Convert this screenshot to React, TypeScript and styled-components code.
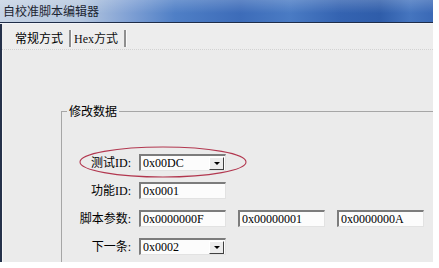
import styled, { createGlobalStyle } from "styled-components";

const GlobalStyle = createGlobalStyle`
	html, body {
		margin: 0;
		padding: 0;
		background: #ffffff;
	}
	body {
		width: 439px;
		height: 268px;
		overflow: hidden;
		font-family: "Liberation Serif", "Noto Sans CJK SC", serif;
		font-size: 12px;
		color: #000;
	}
`;

const Window = styled.div`
	width: 433px;
	height: 262px;
	display: flex;
	flex-direction: column;
	background: #ebebeb;
	overflow: hidden;
`;

const TitleBar = styled.div`
	height: 22px;
	display: flex;
	align-items: center;
	padding-left: 3px;
	background:
		linear-gradient(to bottom, rgba(255, 255, 255, 0.18), rgba(255, 255, 255, 0) 60%),
		linear-gradient(
			to right,
			#c6d3e4 0,
			#b4c6de 80px,
			#7fa0d4 130px,
			#4f7fc6 175px,
			#3d6cb9 240px,
			#4a7bc4 290px,
			#3463b1 340px,
			#2f5daa 380px,
			#4575bf 410px,
			#3a69b6 433px
		);
	border-bottom: 1px solid #1f2d48;
	box-shadow: 0 1px 0 #f2f4f8;
	margin-bottom: 1px;
`;

const Title = styled.span`
	font-family: "Noto Sans CJK SC", sans-serif;
	font-size: 12px;
	line-height: 14px;
	color: #1c2430;
`;

const Body = styled.div`
	flex: 1;
	display: flex;
	flex-direction: column;
	border-left: 2px solid #25314a;
	box-shadow: inset 1px 0 0 #f7f7f7;
	min-height: 0;
`;

const TabRow = styled.div`
	height: 26px;
	display: flex;
	align-items: center;
	padding: 4px 0 0 13px;
	box-sizing: border-box;
	border-bottom: 1px dotted #d2d2d2;
	background: #ededed;
`;

const Tab = styled.span<{ $active?: boolean }>`
	font-family: "Liberation Serif", "Noto Sans CJK SC", serif;
	font-size: 12px;
	line-height: 14px;
	color: ${(p) => (p.$active ? "#000" : "#111")};
	padding-right: 6px;
`;

const TabDivider = styled.span`
	width: 2px;
	height: 17px;
	background: #8f8f8f;
	border-right: 1px solid #fafafa;
	margin-right: 2px;
`;

const Content = styled.div`
	flex: 1;
	display: flex;
	flex-direction: column;
	padding-top: 54px;
	min-height: 0;
`;

const GroupBox = styled.fieldset`
	flex: 1;
	margin: 0 -20px 0 59px;
	padding: 0;
	border: 1px solid #a6a6a6;
	border-right: none;
	border-bottom: none;
	min-width: 0;
`;

const Legend = styled.legend`
	margin-left: 5px;
	padding: 0 2px;
	font-family: "Noto Sans CJK SC", sans-serif;
	font-size: 12px;
	line-height: 14px;
`;

const Form = styled.div`
	display: flex;
	flex-direction: column;
	gap: 11px;
	padding-top: 36px;
`;

const Row = styled.div`
	position: relative;
	display: flex;
	align-items: center;
	height: 17px;
`;

const Label = styled.span`
	width: 69px;
	margin-right: 8px;
	text-align: right;
	font-family: "Liberation Serif", "Noto Sans CJK SC", serif;
	font-size: 12px;
	line-height: 14px;
	white-space: nowrap;
`;

const Fields = styled.div`
	display: flex;
	gap: 12px;
`;

const Field = styled.div`
	position: relative;
	width: 87px;
	height: 17px;
	box-sizing: border-box;
	display: flex;
	align-items: center;
	padding-left: 2px;
	background: #fcfcfc;
	border-top: 2px solid #7c7c7c;
	border-left: 2px solid #7c7c7c;
	border-right: 1px solid #e2e2e2;
	border-bottom: 1px solid #e2e2e2;
	font-family: "Liberation Serif", serif;
	font-size: 12px;
	line-height: 13px;
`;

const DropButton = styled.span`
	margin-left: auto;
	margin-right: 1px;
	width: 15px;
	height: 13px;
	box-sizing: border-box;
	display: flex;
	align-items: center;
	justify-content: center;
	background: #ececec;
	border-top: 1px solid #ffffff;
	border-left: 1px solid #ffffff;
	border-right: 1px solid #404040;
	border-bottom: 1px solid #404040;

	&::after {
		content: "";
		border-left: 3px solid transparent;
		border-right: 3px solid transparent;
		border-top: 3px solid #000;
	}
`;

const Highlight = styled.svg`
	position: absolute;
	left: 17px;
	top: -8px;
	width: 168px;
	height: 32px;
	overflow: visible;
	pointer-events: none;
`;

function Combo({ value }: { value: string }) {
	return (
		<Field>
			{value}
			<DropButton />
		</Field>
	);
}

export default function App() {
	return (
		<>
			<GlobalStyle />
			<Window>
				<TitleBar>
					<Title>自校准脚本编辑器</Title>
				</TitleBar>
				<Body>
					<TabRow>
						<Tab $active>常规方式</Tab>
						<TabDivider />
						<Tab>Hex方式</Tab>
						<TabDivider />
					</TabRow>
					<Content>
						<GroupBox>
							<Legend>修改数据</Legend>
							<Form>
								<Row>
									<Label>测试ID:</Label>
									<Combo value="0x00DC" />
									<Highlight viewBox="0 0 168 32">
										<ellipse
											cx="84"
											cy="16"
											rx="83"
											ry="15"
											fill="none"
											stroke="#b2374f"
											strokeWidth="1.1"
										/>
									</Highlight>
								</Row>
								<Row>
									<Label>功能ID:</Label>
									<Field>0x0001</Field>
								</Row>
								<Row>
									<Label>脚本参数:</Label>
									<Fields>
										<Field>0x0000000F</Field>
										<Field>0x00000001</Field>
										<Field>0x0000000A</Field>
									</Fields>
								</Row>
								<Row>
									<Label>下一条:</Label>
									<Combo value="0x0002" />
								</Row>
							</Form>
						</GroupBox>
					</Content>
				</Body>
			</Window>
		</>
	);
}
